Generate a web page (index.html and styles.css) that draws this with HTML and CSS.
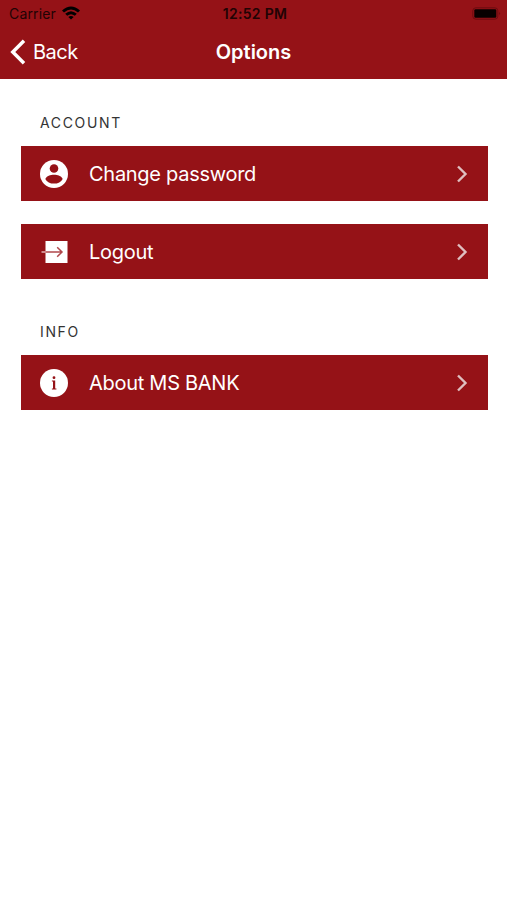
FILE: index.html
```html
<!DOCTYPE html>
<html lang="en">
<head>
<meta charset="utf-8">
<title>Options</title>
<link rel="stylesheet" href="styles.css">
</head>
<body>
<header class="header">
  <div class="status">
    <div class="carrier"><span>Carrier</span>
      <svg width="18" height="14" viewBox="0 0 18 14"><path d="M0 4.5Q9-3.5 18 4.5L16 6.6Q9 0.5 2 6.6ZM3.2 7.8Q9 2.8 14.8 7.8L12.8 9.8Q9 6.6 5.2 9.8ZM6.3 11Q9 8.8 11.7 11L9 13.6Z"/></svg>
    </div>
    <div class="time">12:52 PM</div>
    <div class="power"><svg width="29" height="13" viewBox="0 0 29 13"><rect x=".8" y=".8" width="25" height="11.4" rx="3" fill="none" stroke="#6d0c10"/><rect x="2.3" y="2.2" width="22" height="8.6" rx="1.3" fill="#080000"/><path d="M27.4 4.7q1.6 1.8 0 3.6z" fill="#5d090c"/></svg></div>
  </div>
  <nav class="nav">
    <a class="back"><svg width="16" height="26" viewBox="0 0 16 26"><path d="M14 1.8L2.8 13L14 24.2" fill="none" stroke="#fff" stroke-width="3.5"/></svg><span>Back</span></a>
    <h1 class="title">Options</h1>
    <span></span>
  </nav>
</header>
<main class="main">
  <h2 class="section">ACCOUNT</h2>
  <a class="row">
    <svg class="icon" viewBox="0 0 28 28"><circle cx="14" cy="14" r="14" fill="#fff"/><circle cx="14" cy="8.5" r="4.3" fill="#951217"/><path d="M5.3 18.9C6.5 16.2 10.5 14.8 14 14.8S21.5 16.2 22.7 18.9C21.2 22 17.8 23.6 14 23.6S6.8 22 5.3 18.9Z" fill="#951217"/></svg>
    <span class="label">Change password</span>
    <svg class="chevron" viewBox="0 0 12 18"><path d="M2 1.5L9.5 9L2 16.5"/></svg>
  </a>
  <a class="row">
    <svg class="icon" viewBox="0 0 28 28"><path d="M5.5 3H27.5V25H5.5Z" fill="#fff"/><path d="M5.5 14H22M17.2 9.3L22 14L17.2 18.7" fill="none" stroke="#b0484c" stroke-width="1.5"/><path d="M1.5 14H5.5" stroke="#e3b3b4" stroke-width="1.5"/></svg>
    <span class="label">Logout</span>
    <svg class="chevron" viewBox="0 0 12 18"><path d="M2 1.5L9.5 9L2 16.5"/></svg>
  </a>
  <h2 class="section info">INFO</h2>
  <a class="row">
    <svg class="icon" viewBox="0 0 28 28"><circle cx="14" cy="14" r="14" fill="#fff"/><circle cx="14" cy="8.7" r="1.4" fill="#951217"/><path d="M11.9 11.5H15.2V19.4H16.4V20.5H11.9V19.4H13V12.6H11.9Z" fill="#951217"/></svg>
    <span class="label">About MS BANK</span>
    <svg class="chevron" viewBox="0 0 12 18"><path d="M2 1.5L9.5 9L2 16.5"/></svg>
  </a>
</main>
</body>
</html>
```
FILE: styles.css
```css
*{box-sizing:border-box}
body{margin:0;background:#fff;font-family:Inter,sans-serif;color:#333}
.header{height:79px;background:#951217;color:#fff}
.status{height:26px;display:grid;grid-template-columns:1fr auto 1fr;align-items:center;padding:1px 6px 0 9px;color:#210304;font-size:14px}
.carrier{display:flex;align-items:center;gap:6px;letter-spacing:.15px}
.carrier svg{margin-top:-1px}
.time{font-weight:600;font-size:14px;letter-spacing:.3px}
.power{display:flex;justify-content:flex-end}
.nav{height:51px;display:grid;grid-template-columns:1fr auto 1fr;align-items:center;padding:0 10px}
.back{display:flex;align-items:center;gap:7px;font-size:20px;letter-spacing:-.5px}
.title{margin:0;font-size:20px;font-weight:600;letter-spacing:0}
.main{padding:35px 19.5px 0 20.5px}
.section{height:16px;margin:0 0 16px 19.5px;font-size:14px;line-height:17px;font-weight:400;letter-spacing:1.65px}
.row{height:55px;margin-bottom:23px;background:#951217;color:#fff;display:flex;align-items:center;padding:0 20px 0 19.5px}
.icon{width:28px;height:28px;margin-right:21px}
.label{font-size:20px;letter-spacing:-.28px;flex:1}
.chevron{width:12px;height:18px;fill:none;stroke:#dfbfc0;stroke-width:2.4}
.info{margin-top:44px;margin-bottom:16px}
```
